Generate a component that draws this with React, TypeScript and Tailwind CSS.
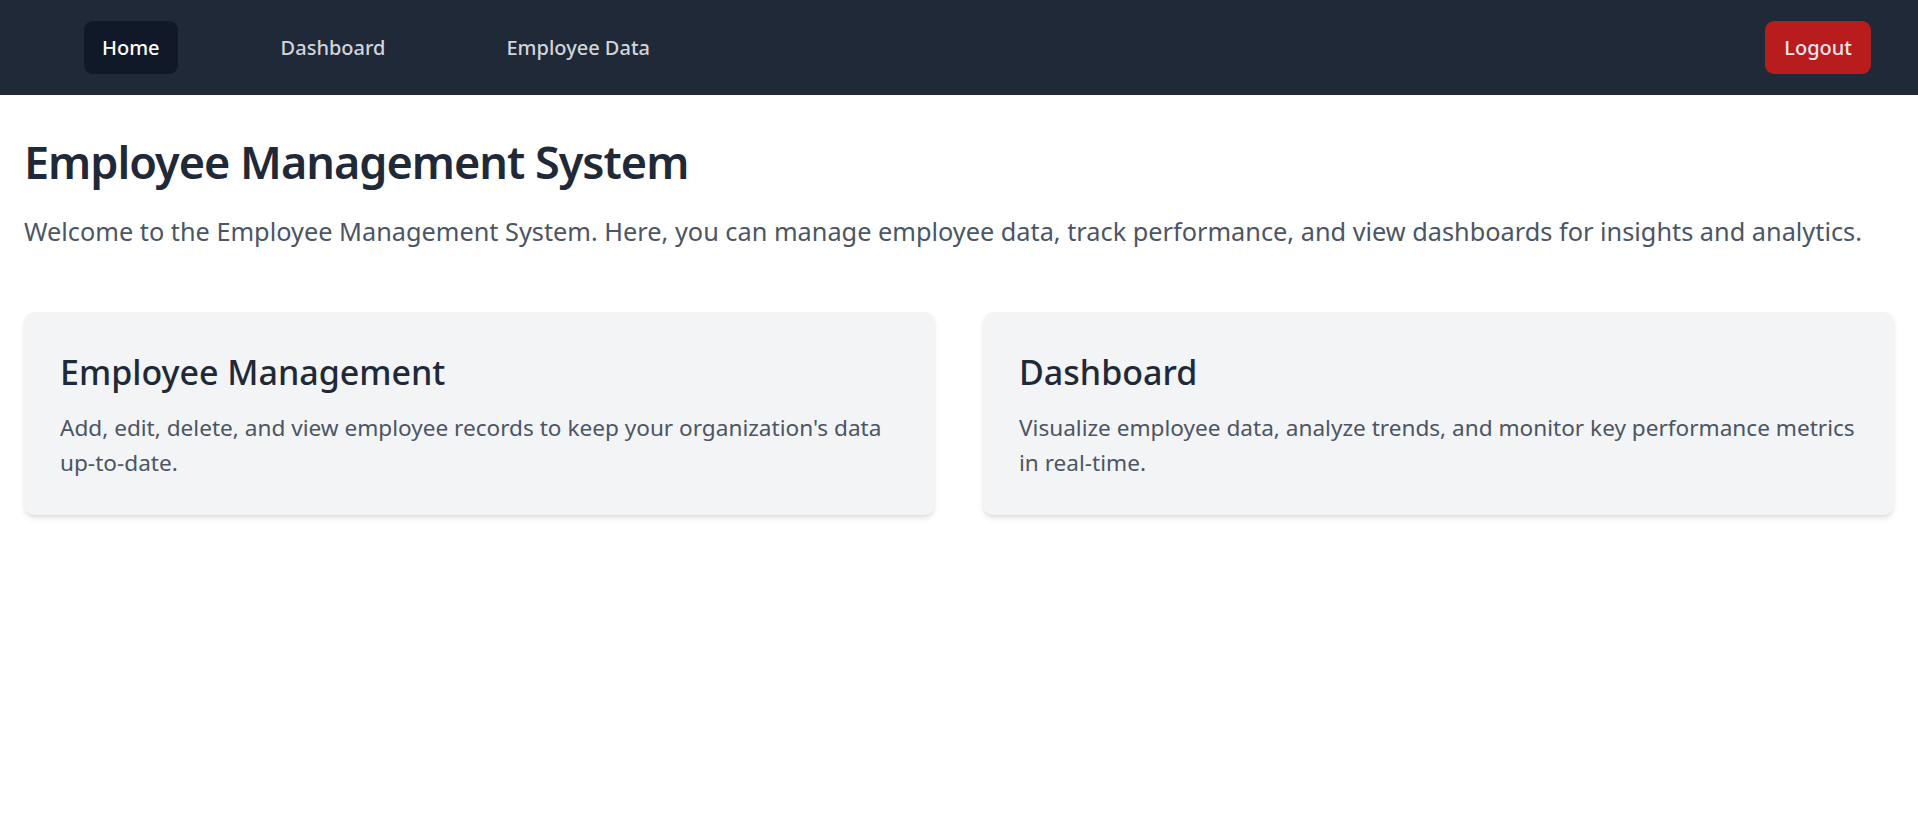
import React from 'react';

const cards = [
  {
    title: 'Employee Management',
    text: "Add, edit, delete, and view employee records to keep your organization's data up-to-date.",
  },
  {
    title: 'Dashboard',
    text: 'Visualize employee data, analyze trends, and monitor key performance metrics in real-time.',
  },
];

const links = ['Home', 'Dashboard', 'Employee Data'];

const App = () => {
  return (
    <div className="min-h-screen bg-white font-['Noto_Sans',sans-serif]">
      <nav className="flex h-[95px] items-center justify-between bg-[#1f2937] pl-[84px] pr-[47px]">
        <div className="flex items-center gap-[85px]">
          {links.map((l, i) => (
            <a
              key={l}
              className={
                i === 0
                  ? 'flex h-[53px] items-center rounded-[9px] bg-[#111827] px-[18px] text-[20px] font-medium text-white'
                  : 'flex h-[53px] items-center rounded-[9px] px-[18px] text-[20px] font-medium text-[#d1d5db]'
              }
            >
              {l}
            </a>
          ))}
        </div>
        <button className="flex h-[53px] items-center rounded-[9px] bg-[#b91c1c] px-[19px] text-[20px] font-medium text-[#e5e7eb]">
          Logout
        </button>
      </nav>
      <main className="px-6 pt-[39px]">
        <h1 className="text-[45px] font-semibold leading-[1.25] tracking-[-1px] text-[#1f2937]">
          Employee Management System
        </h1>
        <p className="mt-[24px] text-[25.3px] leading-[35px] text-[#4b5563]">
          Welcome to the Employee Management System. Here, you can manage employee data, track performance, and view
          dashboards for insights and analytics.
        </p>
        <div className="mt-[63px] grid grid-cols-2 gap-[48px]">
          {cards.map((c) => (
            <div key={c.title} className="rounded-[10px] bg-[#f3f4f6] px-[36px] pb-[35px] pt-[38px] shadow-md">
              <h2 className="text-[34px] font-medium leading-[45px] text-[#1f2937]">{c.title}</h2>
              <p className="mt-[15px] text-[22.6px] leading-[35px] text-[#4b5563]">{c.text}</p>
            </div>
          ))}
        </div>
      </main>
    </div>
  );
};

export default App;
